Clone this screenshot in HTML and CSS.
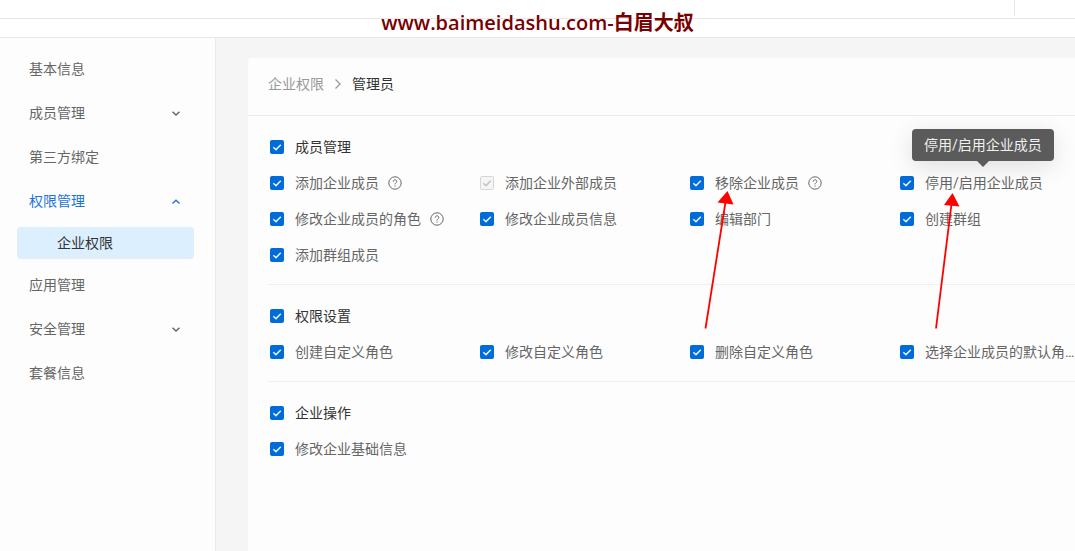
FILE: index.html
```html
<!DOCTYPE html>
<html lang="zh-CN">
	<head>
		<meta charset="UTF-8">
		<title>企业权限</title>
		<link rel="stylesheet" href="styles.css">
	</head>
	<body>
		<svg class="sprite" aria-hidden="true">
			<symbol id="down" viewBox="0 0 10 10"><path d="M1.500 3.800 5 7 8.500 3.800"/></symbol>
			<symbol id="up" viewBox="0 0 10 10"><path d="M1.500 7.500 5 4.300 8.500 7.500"/></symbol>
			<symbol id="help" viewBox="0 0 14 14">
				<circle cx="7" cy="7" r="6.200"/>
				<path d="M5.200 5.700C5.200 3.200 8.800 3.200 8.800 5.500C8.800 6.800 7 6.900 7 8.400M7 9.500V10.600"/>
			</symbol>
		</svg>

		<header class="topBar">
			<div class="topTools"><span class="split"></span></div>
			<div class="topSub"></div>
		</header>
		<div class="watermark">www.baimeidashu.com-白眉大叔</div>

		<div class="layout">
			<nav class="sideMenu">
				<a class="menuItem" href="#">基本信息</a>
				<button class="menuItem" type="button">成员管理<svg class="arrow"><use href="#down"/></svg></button>
				<a class="menuItem" href="#">第三方绑定</a>
				<button class="menuItem open" type="button">权限管理<svg class="arrow"><use href="#up"/></svg></button>
				<a class="subItem" href="#">企业权限</a>
				<a class="menuItem" href="#">应用管理</a>
				<button class="menuItem" type="button">安全管理<svg class="arrow"><use href="#down"/></svg></button>
				<a class="menuItem" href="#">套餐信息</a>
			</nav>

			<main class="content">
				<div class="card">
					<div class="crumb">
						<a href="#">企业权限</a>
						<svg class="crumbArrow" viewBox="0 0 8 12"><path d="M1.500 1.500 6 6 1.500 10.500"/></svg>
						<span>管理员</span>
					</div>

					<section class="group">
						<div class="row title"><label><input type="checkbox" checked><span>成员管理</span></label></div>
						<div class="grid">
							<div class="row">
								<label><input type="checkbox" checked><span>添加企业成员</span></label>
								<button class="help" type="button" aria-label="说明"><svg><use href="#help"/></svg></button>
							</div>
							<div class="row"><label><input type="checkbox" checked disabled><span>添加企业外部成员</span></label></div>
							<div class="row">
								<label><input type="checkbox" checked><span>移除企业成员</span></label>
								<button class="help" type="button" aria-label="说明"><svg><use href="#help"/></svg></button>
							</div>
							<div class="row tipRow">
								<label><input type="checkbox" checked><span>停用/启用企业成员</span></label>
								<div class="tip" role="tooltip">停用/启用企业成员</div>
							</div>
							<div class="row">
								<label><input type="checkbox" checked><span>修改企业成员的角色</span></label>
								<button class="help" type="button" aria-label="说明"><svg><use href="#help"/></svg></button>
							</div>
							<div class="row"><label><input type="checkbox" checked><span>修改企业成员信息</span></label></div>
							<div class="row"><label><input type="checkbox" checked><span>编辑部门</span></label></div>
							<div class="row"><label><input type="checkbox" checked><span>创建群组</span></label></div>
							<div class="row"><label><input type="checkbox" checked><span>添加群组成员</span></label></div>
						</div>
					</section>

					<section class="group">
						<div class="row title"><label><input type="checkbox" checked><span>权限设置</span></label></div>
						<div class="grid">
							<div class="row"><label><input type="checkbox" checked><span>创建自定义角色</span></label></div>
							<div class="row"><label><input type="checkbox" checked><span>修改自定义角色</span></label></div>
							<div class="row"><label><input type="checkbox" checked><span>删除自定义角色</span></label></div>
							<div class="row"><label><input type="checkbox" checked><span>选择企业成员的默认角…</span></label></div>
						</div>
					</section>

					<section class="group">
						<div class="row title"><label><input type="checkbox" checked><span>企业操作</span></label></div>
						<div class="grid">
							<div class="row"><label><input type="checkbox" checked><span>修改企业基础信息</span></label></div>
						</div>
					</section>
				</div>
			</main>
		</div>

		<!-- 红色标注箭头 -->
		<svg class="marks" width="1075" height="551" aria-hidden="true">
			<path class="line" d="M705.500 328.500 725.500 202M936 328.500 951.500 204"/>
			<path class="head" d="M727.500 191 733.500 204.500 717.500 202.500ZM952.500 193 959.500 206.500 944 205Z"/>
		</svg>
	</body>
</html>
```

FILE: styles.css
```css
*,
*::before,
*::after{
	box-sizing: border-box;
}
body{
	margin: 0;
	min-height: 100vh;
	display: flex;
	flex-direction: column;
	position: relative;
	overflow-x: hidden;
	background: #f5f5f5;
	color: #666;
	font: 14px/20px Roboto, "Noto Sans CJK SC", sans-serif;
}
a{
	color: inherit;
	text-decoration: none;
}
button{
	border: none;
	background: none;
	padding: 0;
	color: inherit;
	font: inherit;
	cursor: pointer;
}
svg{
	fill: none;
	stroke: currentColor;
}
.sprite{
	position: absolute;
	width: 0;
	height: 0;
}

/* 顶部 */
.topBar{
	background: #fff;
}
.topTools,
.topSub{
	height: 19px;
	border-bottom: 1px solid #e8e8e8;
}
.topTools{
	display: flex;
	justify-content: flex-end;
	padding-right: 60px;
}
.split{
	width: 1px;
	height: 16px;
	background: #e8e8e8;
}
.watermark{
	position: absolute;
	top: 8px;
	left: 0;
	right: 0;
	text-align: center;
	color: #780000;
	font: 600 20px/30px "Open Sans", "Noto Sans CJK SC", sans-serif;
}

/* 左侧菜单 */
.layout{
	flex: 1;
	display: flex;
}
.sideMenu{
	flex: none;
	width: 216px;
	padding: 9px 21px 0 17px;
	background: #fdfdfd;
	border-right: 1px solid #ebebeb;
}
.menuItem{
	display: flex;
	align-items: center;
	justify-content: space-between;
	width: 100%;
	height: 44px;
	padding: 0 13px 0 12px;
}
.menuItem.open{
	color: #1b74d8;
}
.arrow{
	width: 10px;
	height: 10px;
	stroke-width: 1.4;
}
.subItem{
	display: block;
	margin: 4px 0;
	padding: 6px 40px;
	border-radius: 4px;
	background: #dbeffe;
	color: #333;
}

/* 右侧内容 */
.content{
	flex: 1;
	min-width: 0;
	display: flex;
	padding: 20px 0 0 32px;
}
.card{
	flex: 1;
	min-width: 0;
	background: #fdfdfd;
	border-radius: 4px 0 0 0;
}
.crumb{
	display: flex;
	align-items: center;
	gap: 10px;
	padding: 16px 20px 21px;
	border-bottom: 1px solid #ececec;
	color: #333;
}
.crumb a{
	color: #999;
}
.crumbArrow{
	width: 8px;
	height: 12px;
	stroke: #999;
	stroke-width: 1.3;
}
.group{
	margin-left: 20px;
	padding: 13px 0 11px 2px;
	border-bottom: 1px solid #f0f0f0;
}
.group:last-child{
	border-bottom: none;
}
.grid{
	display: grid;
	grid-template-columns: repeat(3, 210px) minmax(0, 1fr);
}
.row{
	display: flex;
	align-items: center;
	gap: 9px;
	min-width: 0;
	height: 36px;
}
.row label{
	display: flex;
	align-items: center;
	gap: 11px;
	white-space: nowrap;
}
.title{
	color: #333;
}
.row input{
	appearance: none;
	flex: none;
	width: 14px;
	height: 14px;
	margin: 0;
	border-radius: 2px;
	background: #006cd9;
}
.row input:checked{
	background-image: url("data:image/svg+xml,%3Csvg xmlns='http://www.w3.org/2000/svg' viewBox='0 0 14 14'%3E%3Cpath d='M3.300 7.200 6 9.600 10.800 4.800' fill='none' stroke='%23e6f0fb' stroke-width='1.500'/%3E%3C/svg%3E");
}
.row input:disabled{
	background-color: #f5f5f5;
	background-image: url("data:image/svg+xml,%3Csvg xmlns='http://www.w3.org/2000/svg' viewBox='0 0 14 14'%3E%3Cpath d='M3.300 7.200 6 9.600 10.800 4.800' fill='none' stroke='%23c4c4c4' stroke-width='1.500'/%3E%3C/svg%3E");
	box-shadow: inset 0 0 0 1px #d6d6d6;
}
.help,
.help svg{
	display: block;
	width: 14px;
	height: 14px;
}
.tipRow{
	position: relative;
}
.tip{
	position: absolute;
	left: 12px;
	bottom: 40px;
	padding: 6px 12px;
	border-radius: 4px;
	background: #5b5b5b;
	color: #f0f0f0;
	white-space: nowrap;
	box-shadow: 0 6px 24px rgba(0,0,0,.12);
}
.tip::after{
	content: "";
	position: absolute;
	left: 50%;
	top: 100%;
	margin-left: -6px;
	border: 6px solid transparent;
	border-top-color: #5b5b5b;
	border-bottom: none;
}

/* 标注 */
.marks{
	position: absolute;
	left: 0;
	top: 0;
	pointer-events: none;
}
.marks .line{
	stroke: #f00;
	stroke-width: 1.8;
}
.marks .head{
	fill: #f00;
	stroke: none;
}
```
